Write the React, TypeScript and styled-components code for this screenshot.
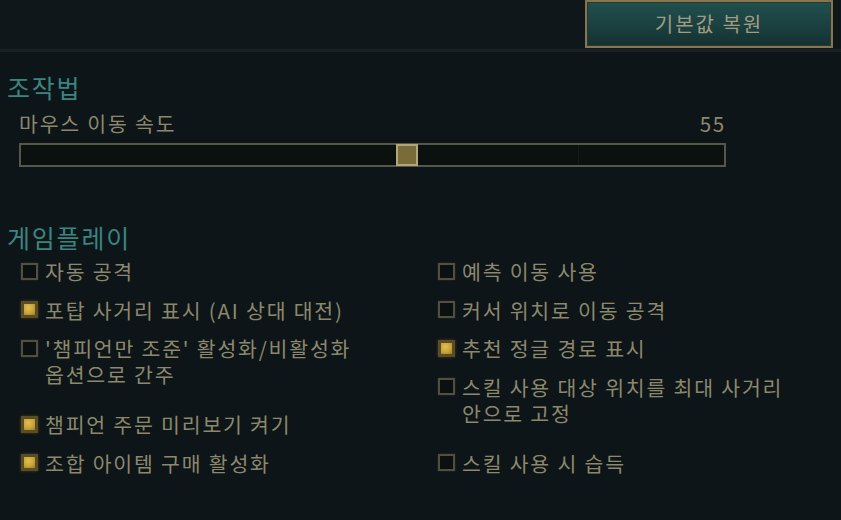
import React from 'react';
import styled, { createGlobalStyle } from 'styled-components';

const GlobalStyle = createGlobalStyle`
  html, body {
    margin: 0;
    padding: 0;
    background: #0d1518;
  }
  * {
    box-sizing: border-box;
  }
`;

const Page = styled.div`
  width: 841px;
  height: 520px;
  overflow: hidden;
  background: #0d1518;
  font-family: "Noto Sans CJK KR", "Noto Sans", sans-serif;
  color: #8c886c;
`;

const TopBar = styled.div`
  height: 52px;
  display: flex;
  justify-content: flex-end;
  align-items: flex-start;
  padding-right: 8px;
  background: #0f171a;
  border-bottom: 3px solid #192125;
`;

const ResetButton = styled.button`
  width: 248px;
  height: 48px;
  margin: 0;
  padding: 0 0 2px;
  border: 2px solid #85764f;
  box-shadow: inset 0 0 0 1px #2a3a33;
  background: linear-gradient(180deg, #20504e 0%, #1b4040 55%, #153030 100%);
  color: #a19c80;
  font-family: inherit;
  font-size: 20px;
  letter-spacing: 2px;
  cursor: pointer;
`;

const Content = styled.div`
  padding: 20px 0 0 7px;
`;

const SectionTitle = styled.h2<{ $gap: number }>`
  margin: ${p => p.$gap}px 0 0;
  font-size: 25px;
  font-weight: 400;
  line-height: 30px;
  color: #3a8580;
  letter-spacing: 1.8px;
`;

const SliderBlock = styled.div`
  width: 707px;
  margin: 8px 0 0 12px;
`;

const SliderLabelRow = styled.div`
  display: flex;
  justify-content: space-between;
  font-size: 20.5px;
  line-height: 26px;
  letter-spacing: 1.8px;
`;

const Track = styled.div`
  position: relative;
  margin-top: 7px;
  height: 24px;
  border: 2px solid #55574a;
  background: #0a110f;
`;

const Tick = styled.div`
  position: absolute;
  top: 0;
  bottom: 0;
  width: 1px;
  background: #141a17;
`;

const Thumb = styled.div`
  position: absolute;
  top: -1px;
  width: 22px;
  height: 22px;
  border: 2px solid #b2a67a;
  background: #796c3a;
`;

const Columns = styled.div`
  display: grid;
  grid-template-columns: 417px 1fr;
  margin: 6px 0 0 14px;
`;

const Column = styled.div`
  display: flex;
  flex-direction: column;
`;

const Option = styled.div<{ $tall?: boolean }>`
  display: flex;
  align-items: flex-start;
  gap: 7px;
  height: ${p => (p.$tall ? 76 : 38.5)}px;
`;

const Box = styled.span<{ $checked: boolean }>`
  flex: none;
  width: 17px;
  height: 17px;
  margin-top: 4.5px;
  ${p =>
    p.$checked
      ? `
    border: 3px solid #5a4c24;
    background: radial-gradient(circle at 40% 35%, #e2c050 0%, #c9a43a 55%, #9a7c2a 100%);
    box-shadow: 0 0 3px #4a3c18;
  `
      : `
    border: 2px solid #504f42;
    background: #0b1110;
    box-shadow: 0 0 2px #2f2f27;
  `}
`;

const OptionText = styled.div`
  display: flex;
  flex-direction: column;
`;

const OptionLine = styled.span`
  font-size: 20.5px;
  line-height: 26px;
  height: 26px;
  letter-spacing: 1.8px;
  white-space: nowrap;
  color: #8c886c;
`;

type Opt = { label: string[]; checked: boolean };

const leftOptions: Opt[] = [
  { label: ['자동 공격'], checked: false },
  { label: ['포탑 사거리 표시 (AI 상대 대전)'], checked: true },
  { label: ["'챔피언만 조준' 활성화/비활성화", '옵션으로 간주'], checked: false },
  { label: ['챔피언 주문 미리보기 켜기'], checked: true },
  { label: ['조합 아이템 구매 활성화'], checked: true },
];

const rightOptions: Opt[] = [
  { label: ['예측 이동 사용'], checked: false },
  { label: ['커서 위치로 이동 공격'], checked: false },
  { label: ['추천 정글 경로 표시'], checked: true },
  { label: ['스킬 사용 대상 위치를 최대 사거리', '안으로 고정'], checked: false },
  { label: ['스킬 사용 시 습득'], checked: false },
];

const OptionList = ({ items }: { items: Opt[] }) => (
  <Column>
    {items.map(o => (
      <Option key={o.label[0]} $tall={o.label.length > 1}>
        <Box $checked={o.checked} />
        <OptionText>
          {o.label.map(line => (
            <OptionLine key={line}>{line}</OptionLine>
          ))}
        </OptionText>
      </Option>
    ))}
  </Column>
);

const App: React.FC = () => {
  const speed = 55;
  const trackInner = 703;
  const thumbSize = 22;
  const thumbLeft = Math.round((speed / 100) * (trackInner - thumbSize));

  return (
    <Page>
      <GlobalStyle />
      <TopBar>
        <ResetButton>기본값 복원</ResetButton>
      </TopBar>
      <Content>
        <SectionTitle $gap={0}>조작법</SectionTitle>
        <SliderBlock>
          <SliderLabelRow>
            <span>마우스 이동 속도</span>
            <span>{speed}</span>
          </SliderLabelRow>
          <Track>
            <Tick style={{ left: 557 }} />
            <Thumb style={{ left: thumbLeft }} />
          </Track>
        </SliderBlock>
        <SectionTitle $gap={55}>게임플레이</SectionTitle>
        <Columns>
          <OptionList items={leftOptions} />
          <OptionList items={rightOptions} />
        </Columns>
      </Content>
    </Page>
  );
};

export default App;
